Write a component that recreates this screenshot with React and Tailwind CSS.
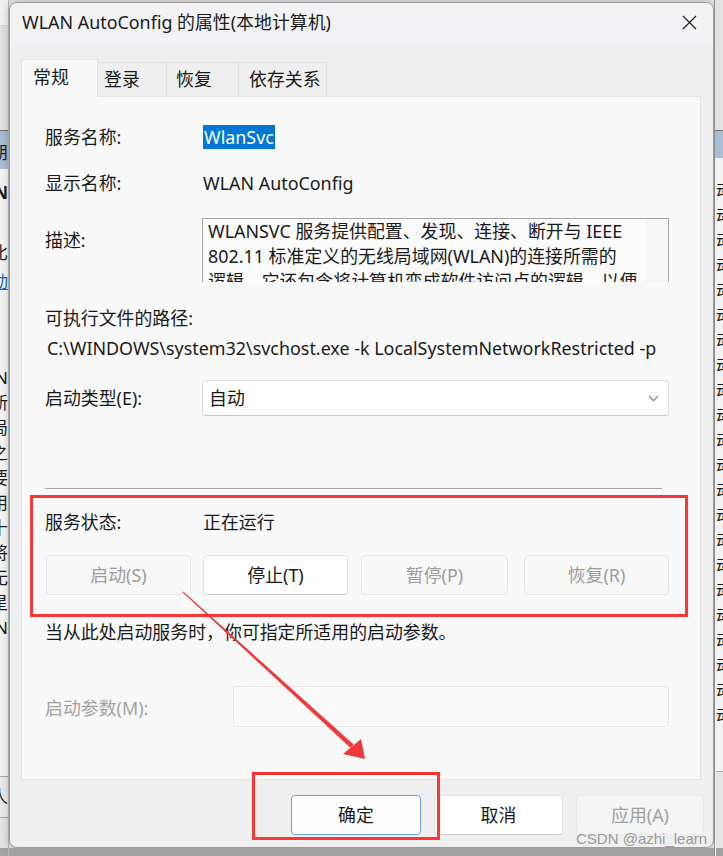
import React from "react";

function CloseIcon() {
  return (
    <svg width="15" height="15" viewBox="0 0 15 15" fill="none" stroke="#1f1f1f" strokeWidth="1.15">
      <path d="M1 1L14 14M14 1L1 14" />
    </svg>
  );
}

function Chevron() {
  return (
    <svg width="11" height="7" viewBox="0 0 11 7" fill="none" stroke="#7a7a7a" strokeWidth="1.1">
      <path d="M1 1.2l4.5 4.5 4.5-4.5" />
    </svg>
  );
}

function LeftStrip() {
  const chars = ["新", "局", "之", "要", "用", "十", "将", "无", "星", "N"];
  return (
    <div className="flex w-[9px] shrink-0 flex-col overflow-hidden border-r border-[#b9b9b9] text-[17px] text-[#1a1a1a]">
      <div className="h-[25px] shrink-0 bg-[#f2f2f2]" />
      <div className="h-[105px] shrink-0 border-t border-[#d6d6d6] bg-[#e3e3e3]" />
      <div className="h-px shrink-0 bg-[#6f6f6f]" />
      <div className="flex h-[38px] shrink-0 items-center justify-end bg-[#a9bdd7] pt-[6px]">
        <span className="whitespace-nowrap">朋</span>
      </div>
      <div className="flex flex-1 flex-col bg-[#f6f6f6]">
        <div className="h-[12px] shrink-0" />
        <div className="flex h-[24px] shrink-0 items-center justify-end font-bold">N</div>
        <div className="h-[36px] shrink-0" />
        <div className="flex h-[24px] shrink-0 items-center justify-end">比</div>
        <div className="h-[5px] shrink-0" />
        <div className="flex h-[24px] shrink-0 items-center justify-end text-[#1a66c2] underline">动</div>
        <div className="h-[72px] shrink-0" />
        <div className="flex h-[24px] shrink-0 items-center justify-end">N</div>
        {chars.map((c, i) => (
          <div key={i} className="flex h-[25px] shrink-0 items-center justify-end">
            {c}
          </div>
        ))}
        <div className="flex-1" />
        <div className="h-px shrink-0 bg-[#a8a8a8]" />
        <div className="flex h-[40px] shrink-0 items-center justify-end bg-[#ececec]">人</div>
        <div className="h-px shrink-0 bg-[#a8a8a8]" />
        <div className="h-[30px] shrink-0 bg-[#e4e4e4]" />
        <div className="h-[8px] shrink-0 bg-[#a2a2a2]" />
      </div>
    </div>
  );
}

function RightStrip() {
  const rows = Array.from({ length: 22 });
  return (
    <div className="flex flex-1 flex-col overflow-hidden border-l border-[#8d8d8d] text-[17px] text-[#1a1a1a]">
      <div className="h-[130px] shrink-0 bg-[#e3e3e3]" />
      <div className="h-px shrink-0 bg-[#6f6f6f]" />
      <div className="h-[27px] shrink-0 bg-[#a9bdd7]" />
      <div className="flex flex-1 flex-col bg-[#f2f2f2] pl-[1px]">
        <div className="h-[20px] shrink-0" />
        {rows.map((_, i) => (
          <div key={i} className="flex h-[25px] shrink-0 items-center whitespace-nowrap">
            动
          </div>
        ))}
        <div className="flex-1" />
        <div className="h-px shrink-0 bg-[#a8a8a8]" />
        <div className="h-[76px] shrink-0 bg-[#e4e4e4]" />
        <div className="h-[8px] shrink-0 bg-[#a2a2a2]" />
      </div>
    </div>
  );
}

function DisabledBtn({ children, w }) {
  return (
    <div className={`flex h-[40px] shrink-0 items-center justify-center rounded-[4px] border border-[#e6e6e6] bg-[#f8f8f8] text-[#9d9d9d] ${w}`}>
      {children}
    </div>
  );
}

function NormalBtn({ children, w }) {
  return (
    <div className={`flex h-[40px] shrink-0 items-center justify-center rounded-[4px] border border-[#e1e1e1] border-b-[#cdcdcd] bg-[#fefefe] text-[#1a1a1a] ${w}`}>
      {children}
    </div>
  );
}

function Panel() {
  return (
    <div className="relative mr-[12px] ml-[11px] h-[684px] shrink-0 border border-[#e3e3e3] bg-[#f9f9f9]">
      <div className="flex flex-col pt-[28px] pl-[23px]">
        <div className="flex h-[24px] items-center">
          <div className="w-[158px] shrink-0">服务名称:</div>
          <div className="flex h-[24px] items-center bg-[#0078d7] pr-[1px] pl-[1px] text-white">WlanSvc</div>
        </div>

        <div className="mt-[22px] flex h-[24px] items-center">
          <div className="w-[158px] shrink-0">显示名称:</div>
          <div>WLAN AutoConfig</div>
        </div>

        <div className="mt-[23px] flex items-start">
          <div className="mt-[10px] flex h-[24px] w-[157px] shrink-0 items-center">描述:</div>
          <div className="flex h-[64px] w-[467px] overflow-hidden border-t border-r border-l border-[#a3a3a3] border-b-[#f2f2f2] bg-[#fbfbfb]">
            <div className="flex-1 overflow-hidden pl-[5px] leading-[25px] whitespace-nowrap">
              <div>WLANSVC 服务提供配置、发现、连接、断开与 IEEE</div>
              <div>802.11 标准定义的无线局域网(WLAN)的连接所需的</div>
              <div>逻辑。它还包含将计算机变成软件访问点的逻辑，以便</div>
            </div>
            <div className="w-[23px] shrink-0 bg-[#f6f6f6]" />
          </div>
        </div>

        <div className="mt-[24px] flex h-[24px] items-center">可执行文件的路径:</div>
        <div className="mt-[6px] flex h-[24px] items-center pl-[2px] whitespace-nowrap">
          C:\WINDOWS\system32\svchost.exe -k LocalSystemNetworkRestricted -p
        </div>

        <div className="mt-[20px] flex h-[36px] items-center">
          <div className="w-[157px] shrink-0">启动类型(E):</div>
          <div className="flex h-[36px] w-[467px] items-center justify-between rounded-[3px] border border-[#dcdcdc] border-b-[#c8c8c8] bg-white pr-[9px] pl-[6px]">
            <span>自动</span>
            <Chevron />
          </div>
        </div>

        <div className="mt-[72px] h-px w-[617px] bg-[#a6a6a6]" />

        <div className="mt-[21px] flex h-[24px] items-center">
          <div className="w-[158px] shrink-0">服务状态:</div>
          <div>正在运行</div>
        </div>

        <div className="mt-[21px] ml-[1px] flex">
          <DisabledBtn w="w-[145px]">启动(S)</DisabledBtn>
          <div className="w-[12px] shrink-0" />
          <NormalBtn w="w-[145px]">停止(T)</NormalBtn>
          <div className="w-[13px] shrink-0" />
          <DisabledBtn w="w-[147px]">暂停(P)</DisabledBtn>
          <div className="w-[16px] shrink-0" />
          <DisabledBtn w="w-[145px]">恢复(R)</DisabledBtn>
        </div>

        <div className="mt-[25px] flex h-[24px] items-center">当从此处启动服务时，你可指定所适用的启动参数。</div>

        <div className="mt-[42px] flex h-[41px] items-center">
          <div className="w-[188px] shrink-0 pt-[4px] text-[#a3a3a3]">启动参数(M):</div>
          <div className="h-[41px] w-[436px] rounded-[3px] border border-[#e6e6e6] bg-[#fafafa]" />
        </div>
      </div>
    </div>
  );
}

function Dialog() {
  return (
    <div className="flex h-[846px] shrink-0 flex-col overflow-hidden rounded-[8px] border border-[#9c9c9c] bg-[#efefef] shadow-[0_0_10px_rgba(0,0,0,0.25)]">
      <div className="flex h-[44px] shrink-0 items-center justify-between bg-[#f3f3f6] pr-[16px] pb-[6px] pl-[12px]">
        <span>WLAN AutoConfig 的属性(本地计算机)</span>
        <CloseIcon />
      </div>
      <div className="h-[12px] shrink-0" />
      <div className="ml-[11px] flex h-[37px] shrink-0 items-end">
        <div className="relative z-10 -mb-px flex h-[38px] w-[77px] items-center border border-b-0 border-[#e3e3e3] bg-[#f9f9f9] pb-[2px] pl-[11px]">
          常规
        </div>
        <div className="flex h-[34px] w-[69px] items-center border-t border-r border-[#e3e3e3] pl-[6px]">登录</div>
        <div className="flex h-[34px] w-[72px] items-center border-t border-r border-[#e3e3e3] pl-[9px]">恢复</div>
        <div className="flex h-[34px] w-[88px] items-center border-t border-r border-[#e3e3e3] pl-[10px] whitespace-nowrap">依存关系</div>
      </div>
      <Panel />
      <div className="flex flex-1 justify-end gap-[13px] pt-[15px] pr-[9px]">
        <div className="flex h-[40px] w-[130px] items-center justify-center rounded-[4px] border border-[#6aa3e0] bg-[#fdfdfd]">
          确定
        </div>
        <div className="flex h-[40px] w-[129px] items-center justify-center rounded-[4px] border border-[#e1e1e1] border-b-[#cdcdcd] bg-[#fefefe]">
          取消
        </div>
        <div className="flex h-[40px] w-[128px] items-center justify-center rounded-[4px] border border-[#ebebeb] bg-[#f5f5f5] text-[#a0a0a0]">
          应用(A)
        </div>
      </div>
    </div>
  );
}

function Annotations() {
  return (
    <>
      <div className="pointer-events-none absolute top-[495px] left-[30px] h-[122px] w-[658px] border-[3px] border-[#fc3636]" />
      <div className="pointer-events-none absolute top-[772px] left-[252px] h-[68px] w-[188px] border-[3px] border-[#fc3636]" />
      <svg className="pointer-events-none absolute top-0 left-0" width="723" height="856" viewBox="0 0 723 856">
        <polygon points="182.7,592.4 183.3,591.6 353.6,744.4 350.4,747.8" fill="#f03a3a" />
        <polygon points="365,759 343,754 361,739" fill="#f03a3a" />
      </svg>
      <div className="pointer-events-none absolute top-[830px] left-[576px] font-['Liberation_Sans',Arial,sans-serif] text-[15px] leading-[17px] whitespace-nowrap text-[#9a9a9a]">
        CSDN @azhi_learn
      </div>
    </>
  );
}

export default function App() {
  return (
    <div className="relative flex h-[856px] w-[723px] overflow-hidden bg-[#e4e4e4] font-['Noto_Sans','Noto_Sans_CJK_SC',sans-serif] text-[17.9px] text-[#1a1a1a]">
      <LeftStrip />
      <div className="flex w-[705px] shrink-0 flex-col">
        <div className="h-[2px] shrink-0 bg-[#e4e4e4]" />
        <Dialog />
        <div className="flex-1 bg-[#a2a2a2]" />
      </div>
      <RightStrip />
      <Annotations />
    </div>
  );
}
